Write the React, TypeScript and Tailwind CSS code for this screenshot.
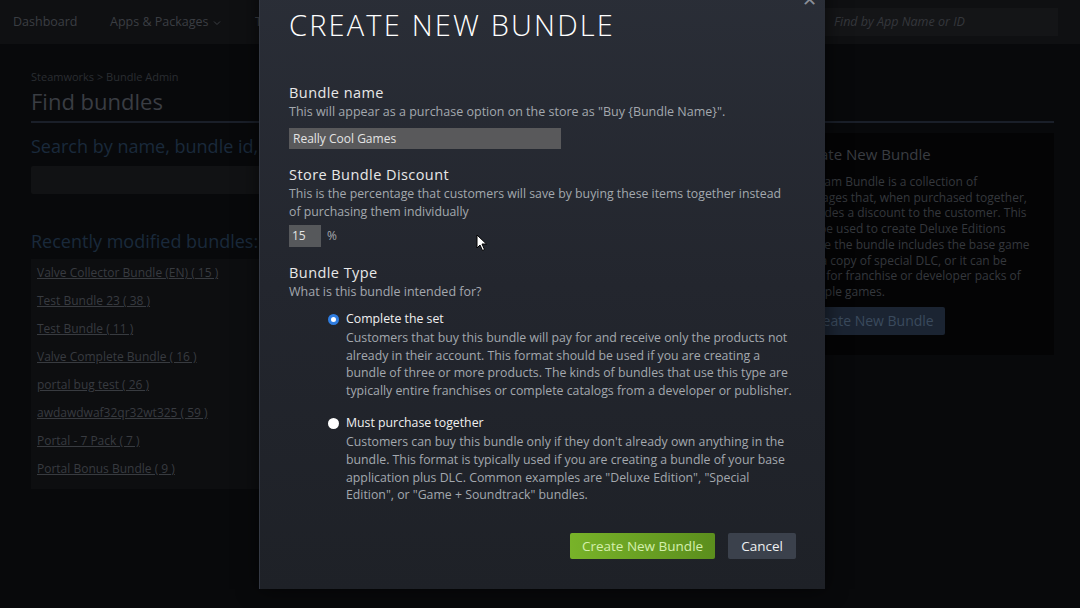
import React from "react";

const bundles = [
  "Valve Collector Bundle (EN) ( 15 )",
  "Test Bundle 23 ( 38 )",
  "Test Bundle ( 11 )",
  "Valve Complete Bundle ( 16 )",
  "portal bug test ( 26 )",
  "awdawdwaf32qr32wt325 ( 59 )",
  "Portal - 7 Pack ( 7 )",
  "Portal Bonus Bundle ( 9 )",
];

export default function App() {
  return (
    <div
      className="relative w-[1080px] h-[608px] overflow-hidden bg-[#08090b]"
      style={{ fontFamily: '"Open Sans", "Noto Sans", Arial, sans-serif' }}
    >
      {/* Nav bar */}
      <div className="h-[44px] bg-[#0f1012] flex items-center text-[12.5px] text-[#3b3e43]">
        <div className="pl-[13px] w-[110px]">Dashboard</div>
        <div className="flex items-center gap-[4px] w-[145px]">
          Apps &amp; Packages
          <svg width="8" height="6" viewBox="0 0 8 6" className="mt-[1px]">
            <path d="M1 1.5 L4 4.5 L7 1.5" stroke="#3b3e43" strokeWidth="1" fill="none" />
          </svg>
        </div>
        <div>Tools</div>
        <div className="flex-1" />
        <div className="w-[233px] h-[28px] mr-[22px] bg-[#141517] flex items-center pl-[9px] italic text-[12.5px] text-[#34373c]">
          Find by App Name or ID
        </div>
      </div>

      {/* Page content */}
      <div className="w-[1023px] ml-[31px] pt-[26px]">
        <div className="text-[11px] text-[#2a2d32] leading-[14px]">Steamworks &gt; Bundle Admin</div>
        <div className="text-[22px] text-[#3a3d43] leading-[30px] pb-[5px] border-b-2 border-[#1a1f29] mt-[2px]">
          Find bundles
        </div>
        <div className="flex gap-[14px] mt-[10px]">
          <div className="flex-1">
            <div className="text-[18px] text-[#1a293b] leading-[26px] w-[228px] whitespace-nowrap overflow-hidden">Search by name, bundle id, or package id</div>
            <div className="h-[28px] mt-[7px] bg-[#111214] rounded-[2px]" />
            <div className="text-[18px] text-[#1a293b] leading-[26px] mt-[34px]">Recently modified bundles:</div>
            <div className="mt-[5px] bg-[#0d0e10] pb-[6px] px-[6px]">
              {bundles.map((b) => (
                <div key={b} className="h-[28px] flex items-center text-[12px] text-[#383b40] underline">
                  {b}
                </div>
              ))}
            </div>
          </div>
          <div className="w-[270px] h-[222px] bg-[#040405] px-[12px] pt-[10px]">
            <div className="text-[15px] text-[#3a3d42] leading-[22px]">Create New Bundle</div>
            <div className="mt-[9px] text-[12px] leading-[15.7px] text-[#35383d] w-[236px]">
              A Steam Bundle is a collection of packages that, when purchased together, provides a discount to the customer. This can be used to create Deluxe Editions where the bundle includes the base game and a copy of special DLC, or it can be used for franchise or developer packs of multiple games.
            </div>
            <div className="mt-[7px] w-[149px] h-[28px] bg-[#1b2432] text-[14px] text-[#3a4a5d] flex items-center pl-[12px] rounded-[2px]">
              Create New Bundle
            </div>
          </div>
        </div>
      </div>

      {/* Modal */}
      <div className="absolute left-[259px] top-[-20px] w-[566px] h-[609px] bg-gradient-to-b from-[#2a2e37] via-[#23262e] to-[#1e2127] border-l border-[#343944] shadow-[0_0_20px_rgba(0,0,0,0.6)]">
        <div className="absolute right-[8px] top-[10px] text-[#8a8f98] text-[18px] leading-none">✕</div>
        <div className="pl-[29px] pr-[18px] pt-[26px]">
          <div className="text-[29px] leading-[38px] tracking-[0.075em] text-white font-light">CREATE NEW BUNDLE</div>

          <div className="mt-[39px] text-[14.5px] leading-[20px] text-[#e8e8e8] tracking-[0.03em]">Bundle name</div>
          <div className="text-[12.5px] leading-[18px] text-[#a3a8ae]">
            This will appear as a purchase option on the store as "Buy {"{"}Bundle Name{"}"}".
          </div>
          <div className="mt-[7px] w-[272px] h-[21px] bg-[#59595b] flex items-center pl-[4px] text-[12px] text-[#e4e4e4]">
            Really Cool Games
          </div>

          <div className="mt-[16px] text-[14.5px] leading-[20px] text-[#e8e8e8] tracking-[0.03em]">Store Bundle Discount</div>
          <div className="text-[12.3px] leading-[17.5px] text-[#a3a8ae] w-[500px]">
            This is the percentage that customers will save by buying these items together instead of purchasing them individually
          </div>
          <div className="mt-[5px] flex items-center gap-[6px]">
            <div className="w-[32px] h-[22px] bg-[#56585b] flex items-center pl-[3px] text-[12px] text-[#e4e4e4]">15</div>
            <div className="text-[12px] text-[#a3a8ae]">%</div>
          </div>

          <div className="mt-[16px] text-[14.5px] leading-[20px] text-[#e8e8e8] tracking-[0.03em]">Bundle Type</div>
          <div className="text-[12.5px] leading-[18px] text-[#a3a8ae]">What is this bundle intended for?</div>

          <div className="pl-[39px] mt-[9px]">
            <div className="flex gap-[7px]">
              <div className="mt-[4px] w-[11px] h-[11px] rounded-full bg-white border-[3px] border-[#2f7de1] shrink-0" />
              <div className="w-[452px]">
                <div className="text-[12.3px] leading-[18px] text-[#f0f0f0]">Complete the set</div>
                <div className="text-[12.3px] leading-[17.6px] text-[#a3a8ae] mt-[1px]">
                  Customers that buy this bundle will pay for and receive only the products not already in their account. This format should be used if you are creating a bundle of three or more products. The kinds of bundles that use this type are typically entire franchises or complete catalogs from a developer or publisher.
                </div>
              </div>
            </div>
            <div className="flex gap-[7px] mt-[15px]">
              <div className="mt-[4px] w-[11px] h-[11px] rounded-full bg-white shrink-0" />
              <div className="w-[452px]">
                <div className="text-[12.3px] leading-[18px] text-[#f0f0f0]">Must purchase together</div>
                <div className="text-[12.3px] leading-[17.6px] text-[#a3a8ae] mt-[1px]">
                  Customers can buy this bundle only if they don't already own anything in the bundle. This format is typically used if you are creating a bundle of your base application plus DLC. Common examples are "Deluxe Edition", "Special Edition", or "Game + Soundtrack" bundles.
                </div>
              </div>
            </div>
          </div>

          <div className="flex justify-end gap-[13px] mt-[29px] pr-[11px]">
            <div className="w-[145px] h-[26px] rounded-[2px] bg-gradient-to-r from-[#78b329] to-[#5b8e1d] flex items-center justify-center text-[13.5px] text-[#d4efad]">
              Create New Bundle
            </div>
            <div className="w-[68px] h-[26px] rounded-[2px] bg-[#3b414c] flex items-center justify-center text-[13.5px] text-[#eef0f2]">
              Cancel
            </div>
          </div>
        </div>
      </div>

      {/* Mouse cursor */}
      <svg className="absolute left-[476px] top-[234px]" width="12" height="18" viewBox="0 0 12 18">
        <path d="M1 1 L1 14 L4 11 L6.5 16.5 L8.5 15.5 L6 10 L10.5 10 Z" fill="#ffffff" stroke="#000000" strokeWidth="1" />
      </svg>
    </div>
  );
}
